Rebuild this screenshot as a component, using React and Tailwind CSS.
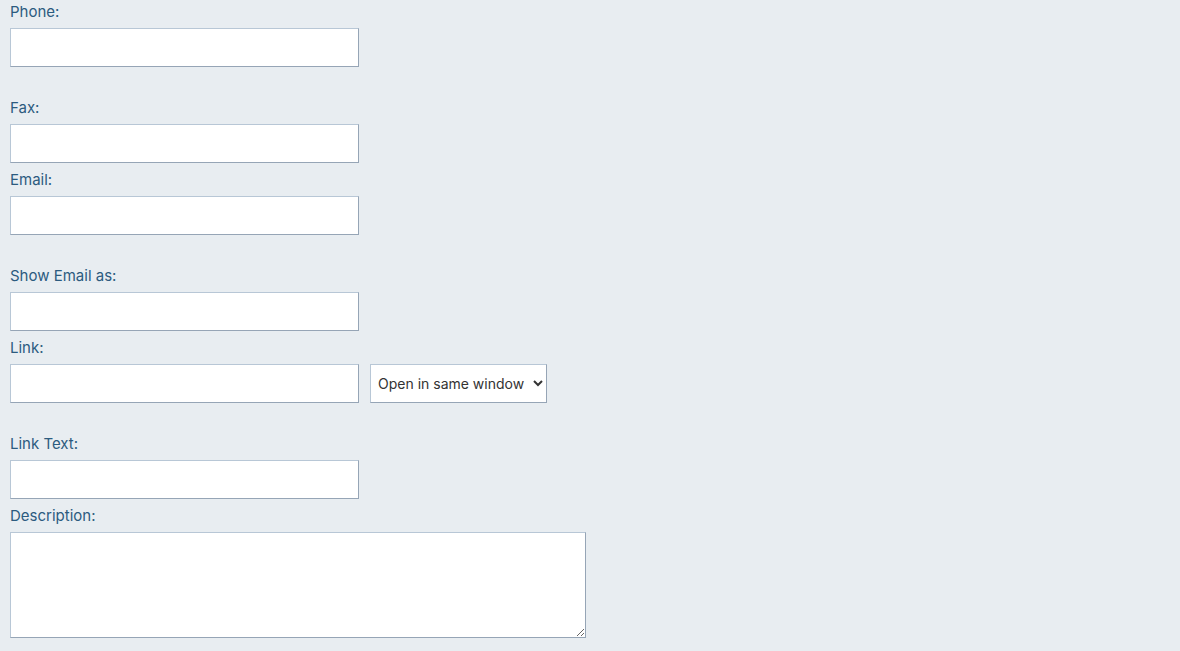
import React from 'react';

const boxBorder =
    'border border-t-[#b8c7d6] border-l-[#b8c7d6] border-b-[#96a5b6] border-r-[#96a5b6] bg-white';

const Field = ({ label, gap, first, children }) => (
    <div className={first ? '' : gap ? 'mt-[28.6px]' : 'mt-[5.4px]'}>
        <label className="block text-[15px] leading-6 mb-1 text-[#2c5b7f]">{label}</label>
        {children}
    </div>
);

const TextInput = () => (
    <input type="text" className={`block w-[349px] h-[39px] px-2 outline-none ${boxBorder}`} />
);

const App = () => {
    return (
        <div
            className="min-h-screen w-full bg-[#e8edf1] px-[10px]"
            style={{ fontFamily: 'Inter, Lato, sans-serif' }}
        >
            <Field label="Phone:" first>
                <TextInput />
            </Field>
            <Field label="Fax:" gap>
                <TextInput />
            </Field>
            <Field label="Email:">
                <TextInput />
            </Field>
            <Field label="Show Email as:" gap>
                <TextInput />
            </Field>
            <Field label="Link:">
                <div className="flex items-center gap-[11px]">
                    <TextInput />
                    <select
                        className={`w-[177px] h-[39px] pl-[3px] pr-1 text-[14px] text-[#333] outline-none ${boxBorder}`}
                        defaultValue="same"
                    >
                        <option value="same">Open in same window</option>
                        <option value="new">Open in new window</option>
                    </select>
                </div>
            </Field>
            <Field label="Link Text:" gap>
                <TextInput />
            </Field>
            <Field label="Description:">
                <textarea className={`block w-[576px] h-[106px] p-2 outline-none ${boxBorder}`} />
            </Field>
        </div>
    );
};

export default App;
